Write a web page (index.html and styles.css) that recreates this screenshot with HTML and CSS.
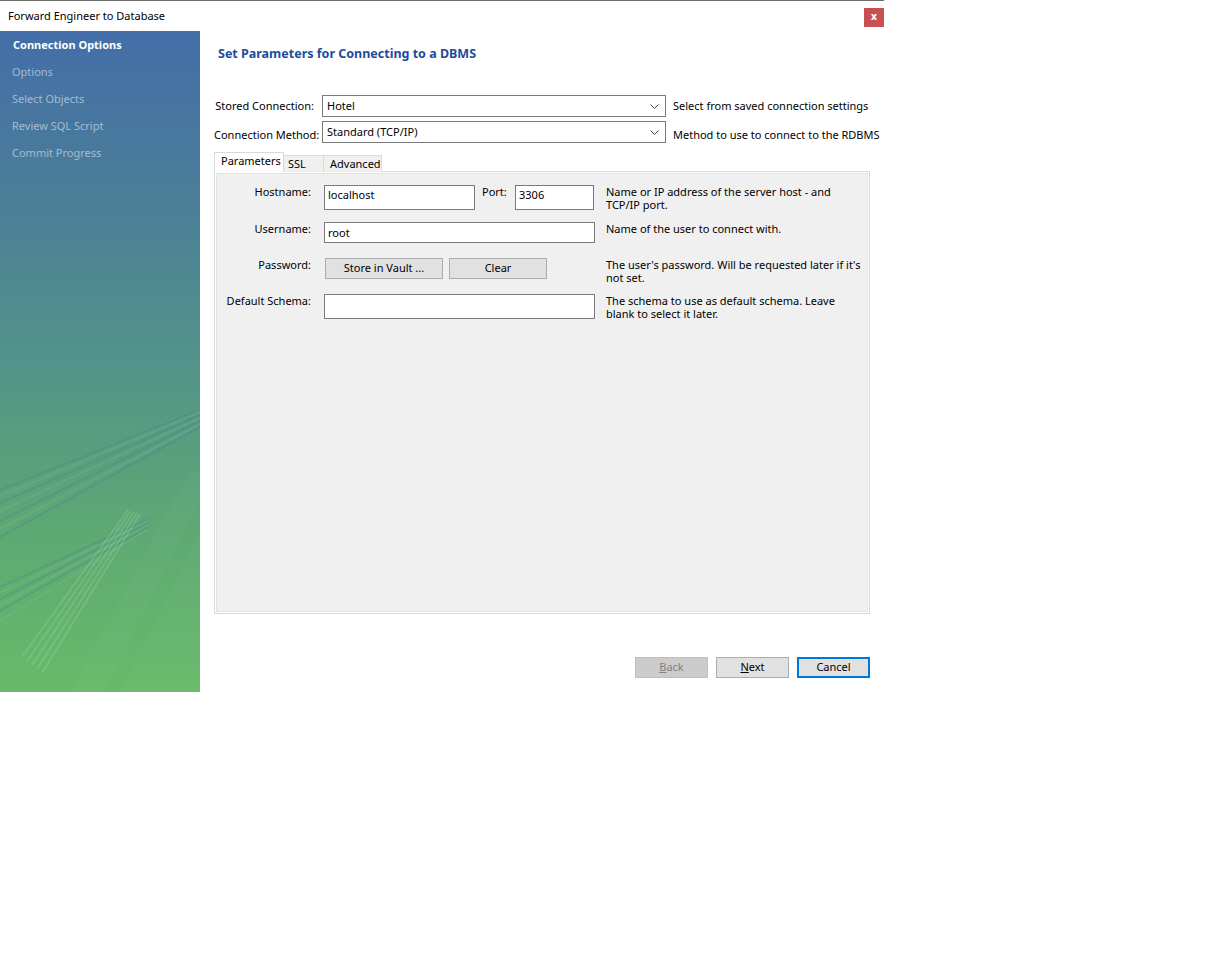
FILE: index.html
```html
<!DOCTYPE html>
<html>
<head>
<meta charset="utf-8">
<title>Forward Engineer to Database</title>
<link rel="stylesheet" href="styles.css">
</head>
<body>
<div class="window">
  <div class="titlebar">
    <span class="title">Forward Engineer to Database</span>
    <span class="close">x</span>
  </div>
  <div class="body">
    <aside class="sidebar">
      <ul class="steps">
        <li class="step active">Connection Options</li>
        <li class="step">Options</li>
        <li class="step">Select Objects</li>
        <li class="step">Review SQL Script</li>
        <li class="step">Commit Progress</li>
      </ul>
      <svg class="deco" width="200" height="661" viewBox="0 0 200 661">
        <polygon points="120,661 200,500 200,661" fill="rgba(255,255,255,0.025)"/>
        <polygon points="70,661 190,440 200,440 200,470 105,661" fill="rgba(255,255,255,0.025)"/>
        <g stroke="rgba(70,125,150,0.28)" stroke-width="2" fill="none">
          <line x1="0" y1="459" x2="200" y2="379"/>
          <line x1="0" y1="472" x2="200" y2="384"/>
          <line x1="0" y1="490" x2="200" y2="390"/>
          <line x1="0" y1="506" x2="200" y2="396"/>
          <line x1="0" y1="556" x2="148" y2="488"/>
          <line x1="0" y1="568" x2="148" y2="492"/>
          <line x1="0" y1="580" x2="148" y2="496"/>
        </g>
        <g stroke="rgba(140,200,160,0.18)" stroke-width="2" fill="none">
          <line x1="0" y1="465" x2="200" y2="381"/>
          <line x1="0" y1="480" x2="200" y2="387"/>
          <line x1="0" y1="498" x2="200" y2="393"/>
          <line x1="0" y1="562" x2="148" y2="490"/>
          <line x1="0" y1="574" x2="148" y2="494"/>
          <line x1="0" y1="590" x2="148" y2="498"/>
        </g>
        <g stroke="rgba(160,215,165,0.28)" stroke-width="2" fill="none">
          <line x1="22" y1="626" x2="128" y2="479"/>
          <line x1="27" y1="630" x2="131" y2="480"/>
          <line x1="32" y1="634" x2="134" y2="481"/>
          <line x1="37" y1="638" x2="137" y2="482"/>
          <line x1="42" y1="642" x2="140" y2="483"/>
        </g>
      </svg>
    </aside>
    <main class="main">
      <h1 class="heading">Set Parameters for Connecting to a DBMS</h1>
      <div class="conn-grid">
        <span class="conn-label">Stored Connection:</span>
        <div class="select"><span>Hotel</span><svg class="chev" width="9" height="5" viewBox="0 0 9 5"><polyline points="0.5,0.5 4.5,4.5 8.5,0.5" fill="none" stroke="#444" stroke-width="1"/></svg></div>
        <span class="conn-hint">Select from saved connection settings</span>
        <span class="conn-label low">Connection Method:</span>
        <div class="select"><span>Standard (TCP/IP)</span><svg class="chev" width="9" height="5" viewBox="0 0 9 5"><polyline points="0.5,0.5 4.5,4.5 8.5,0.5" fill="none" stroke="#444" stroke-width="1"/></svg></div>
        <span class="conn-hint low">Method to use to connect to the RDBMS</span>
      </div>
      <div class="tabs">
        <span class="tab active">Parameters</span>
        <span class="tab ssl">SSL</span>
        <span class="tab adv">Advanced</span>
      </div>
      <div class="panel">
        <div class="panel-inner">
          <div class="row r1">
            <span class="plabel">Hostname:</span>
            <div class="controls">
              <div class="input host">localhost</div>
              <span class="port-label">Port:</span>
              <div class="input port">3306</div>
            </div>
            <p class="help">Name or IP address of the server host - and TCP/IP port.</p>
          </div>
          <div class="row r2">
            <span class="plabel">Username:</span>
            <div class="controls">
              <div class="input user">root</div>
            </div>
            <p class="help">Name of the user to connect with.</p>
          </div>
          <div class="row r3">
            <span class="plabel">Password:</span>
            <div class="controls">
              <span class="btn vault">Store in Vault ...</span>
              <span class="btn clear">Clear</span>
            </div>
            <p class="help">The user's password. Will be requested later if it's not set.</p>
          </div>
          <div class="row r4">
            <span class="plabel">Default Schema:</span>
            <div class="controls">
              <div class="input schema"></div>
            </div>
            <p class="help">The schema to use as default schema. Leave blank to select it later.</p>
          </div>
        </div>
      </div>
      <div class="footer">
        <span class="btn nav disabled"><u>B</u>ack</span>
        <span class="btn nav"><u>N</u>ext</span>
        <span class="btn nav primary">Cancel</span>
      </div>
    </main>
  </div>
</div>
</body>
</html>
```

FILE: styles.css
```css
* { box-sizing: border-box; }
html, body { margin: 0; padding: 0; background: #fff; }
body {
  font-family: "Noto Sans", "Open Sans", sans-serif;
  font-size: 11px;
  color: #000;
  width: 1221px;
  height: 960px;
}
.window {
  width: 884px;
  height: 692px;
  border-top: 1px solid #6e6e6e;
  background: #fff;
  display: flex;
  flex-direction: column;
}
.titlebar {
  height: 30px;
  display: flex;
  align-items: flex-start;
  justify-content: space-between;
  padding-left: 8px;
}
.title {
  line-height: 15px;
  margin-top: 7px;
}
.close {
  margin-top: 7px;
  width: 20px;
  height: 19px;
  background: #c75050;
  color: #fff;
  font-weight: bold;
  font-size: 10px;
  line-height: 17px;
  text-align: center;
  font-family: "DejaVu Sans", sans-serif;
}
.body {
  flex: 1;
  display: flex;
}
.sidebar {
  width: 200px;
  height: 661px;
  position: relative;
  overflow: hidden;
  background: linear-gradient(to bottom, #436ea8 0%, #4a7e98 25%, #53938a 50%, #5ea874 75%, #68ba69 100%);
}
.steps {
  list-style: none;
  margin: 0;
  padding: 0 0 0 12px;
  position: relative;
  z-index: 1;
}
.step {
  line-height: 27px;
  height: 27px;
  color: rgba(225, 235, 240, 0.6);
}
.step.active {
  color: #fff;
  font-weight: bold;
  padding-left: 1px;
}
.deco {
  position: absolute;
  left: 0;
  top: 0;
}
.main {
  width: 684px;
  padding: 0 14px;
}
.heading {
  margin: 15px 0 0 4px;
  font-size: 12.5px;
  line-height: 16px;
  font-weight: bold;
  color: #1c4c9c;
}
.conn-grid {
  margin-top: 33px;
  display: grid;
  grid-template-columns: 100px 344px 1fr;
  column-gap: 8px;
  row-gap: 4px;
}
.conn-label {
  text-align: right;
  align-self: center;
  line-height: 15px;
  white-space: nowrap;
  padding-bottom: 1px;
}
.conn-label.low, .conn-hint.low { align-self: end; }
.conn-hint {
  align-self: center;
  line-height: 15px;
  white-space: nowrap;
  margin-left: -1px;
  padding-bottom: 1px;
}
.select {
  height: 22px;
  border: 1px solid #7a7a7a;
  background: #fff;
  display: flex;
  align-items: center;
  justify-content: space-between;
  padding: 0 6px 1px 4px;
  line-height: 15px;
}
.chev { margin-top: 1px; }
.tabs {
  margin-top: 9px;
  display: flex;
  align-items: flex-end;
  height: 20px;
  margin-bottom: -1px;
  position: relative;
  z-index: 1;
}
.tab {
  height: 17px;
  line-height: 16px;
  background: #f0f0f0;
  border: 1px solid #d9d9d9;
  border-left: none;
  border-bottom: none;
  padding: 0 4px;
}
.tab.active {
  width: 70px;
  height: 20px;
  background: #fff;
  border-left: 1px solid #d9d9d9;
  padding: 0 6px;
  line-height: 16px;
}
.tab.ssl { width: 40px; }
.tab.adv { width: 58px; padding-left: 6px; }
.panel {
  width: 656px;
  height: 443px;
  border: 1px solid #d9d9d9;
  background: #fff;
  padding: 1px;
}
.panel-inner {
  height: 100%;
  border: 1px solid #e4e4e4;
  background: #f0f0f0;
  padding-top: 11px;
}
.row {
  display: flex;
  align-items: flex-start;
}
.r1 { height: 37px; }
.r2 { height: 36px; }
.r3 { height: 36px; }
.r4 { height: 30px; }
.plabel {
  width: 94px;
  text-align: right;
  line-height: 13px;
  margin-right: 13px;
  white-space: nowrap;
}
.controls {
  width: 271px;
  display: flex;
  align-items: flex-start;
}
.input {
  background: #fff;
  border: 1px solid #7a7a7a;
  padding: 1px 3px;
  line-height: 15px;
}
.input.host { width: 151px; height: 25px; }
.input.port { width: 79px; height: 25px; }
.input.user { width: 271px; height: 21px; padding-top: 2px; }
.input.schema { width: 271px; height: 25px; }
.port-label {
  width: 33px;
  margin-left: 7px;
  line-height: 13px;
}
.help {
  margin: 0 0 0 11px;
  width: 256px;
  line-height: 13px;
}
.btn {
  display: inline-block;
  height: 21px;
  background: #e1e1e1;
  border: 1px solid #adadad;
  text-align: center;
  line-height: 18px;
}
.btn.vault { width: 118px; margin-left: 1px; }
.btn.clear { width: 98px; margin-left: 6px; }
.footer {
  margin-top: 43px;
  display: flex;
  justify-content: flex-end;
  gap: 8px;
}
.btn.nav { width: 73px; }
.btn u { text-decoration: underline; }
.btn.disabled {
  background: #cccccc;
  border-color: #bfbfbf;
  color: #838383;
}
.btn.primary {
  border: 2px solid #0078d7;
  line-height: 16px;
}
```
